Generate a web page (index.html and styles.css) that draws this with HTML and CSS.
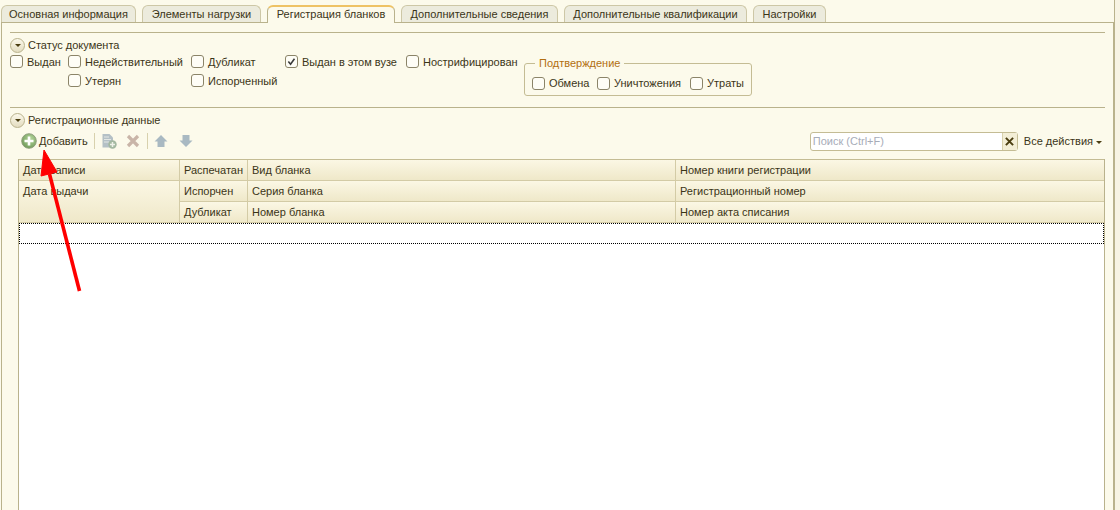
FILE: index.html
```html
<!DOCTYPE html>
<html lang="en">
<head>
    <meta charset="UTF-8">
    <title>Регистрация бланков</title>
    <link rel="stylesheet" href="styles.css">
</head>
<body>

    <div class="window">

        <!-- Tabs -->
        <div class="tabs">
            <div class="tab tab-1">Основная информация</div>
            <div class="tab tab-2">Элементы нагрузки</div>
            <div class="tab tab-3 active">Регистрация бланков</div>
            <div class="tab tab-4">Дополнительные сведения</div>
            <div class="tab tab-5">Дополнительные квалификации</div>
            <div class="tab tab-6">Настройки</div>
        </div>

        <div class="panel">

            <!-- Document status -->
            <section class="group status-group">
                <div class="group-title">
                    <span class="toggle"></span>
                    <span>Статус документа</span>
                </div>
                <div class="status-grid">
                    <label class="check"><span class="box"></span>Выдан</label>
                    <label class="check"><span class="box"></span>Недействительный</label>
                    <label class="check"><span class="box"></span>Дубликат</label>
                    <label class="check">
                        <span class="box">
                            <svg viewBox="0 0 14 14" width="12" height="12"><path d="M3 6.5 L5.8 9.8 L10.8 2.8" fill="none" stroke="#3a3a3a" stroke-width="2"/></svg>
                        </span>Выдан в этом вузе
                    </label>
                    <label class="check"><span class="box"></span>Нострифицирован</label>

                    <fieldset class="confirm">
                        <legend>Подтверждение</legend>
                        <label class="check"><span class="box"></span>Обмена</label>
                        <label class="check"><span class="box"></span>Уничтожения</label>
                        <label class="check"><span class="box"></span>Утраты</label>
                    </fieldset>

                    <label class="check col-2"><span class="box"></span>Утерян</label>
                    <label class="check col-3"><span class="box"></span>Испорченный</label>
                </div>
            </section>

            <!-- Registration data -->
            <section class="group data-group">
                <div class="group-title">
                    <span class="toggle"></span>
                    <span>Регистрационные данные</span>
                </div>

                <div class="toolbar">
                    <svg class="icon-add" viewBox="0 0 16 16" width="16" height="16">
                        <defs>
                            <radialGradient id="addFill" cx="60%" cy="35%" r="70%">
                                <stop offset="0" stop-color="#b4d69a"/>
                                <stop offset="1" stop-color="#6f9a5a"/>
                            </radialGradient>
                        </defs>
                        <circle cx="8" cy="8" r="7.3" fill="url(#addFill)" stroke="#8a9a78" stroke-width="0.9"/>
                        <path d="M8 3.5 V12.5 M3.5 8 H12.5" stroke="#fff" stroke-width="2.6"/>
                    </svg>
                    <span class="add-label">Добавить</span>
                    <span class="sep sep-1"></span>
                    <svg class="icon-copy" viewBox="0 0 16 16" width="16" height="16">
                        <path d="M1.5 1 H8.5 L12 4.5 V14.5 H1.5 Z" fill="#b4c0c6"/>
                        <path d="M3 4 H8 M3 6.5 H10 M3 9 H8" stroke="#e3e7e4" stroke-width="1"/>
                        <circle cx="11.5" cy="11.5" r="4.2" fill="#a3b8a0"/>
                        <path d="M11.5 9 V14 M9 11.5 H14" stroke="#eef1e8" stroke-width="1.5"/>
                    </svg>
                    <svg class="icon-del" viewBox="0 0 14 14" width="14" height="14">
                        <path d="M2 2 L12 12 M12 2 L2 12" stroke="#c9b5a8" stroke-width="3.2"/>
                    </svg>
                    <span class="sep sep-2"></span>
                    <svg class="icon-up" viewBox="0 0 14 14" width="14" height="14">
                        <path d="M7 1 L13.5 7.5 H10.5 V13 H3.5 V7.5 H0.5 Z" fill="#a9b9c2"/>
                    </svg>
                    <svg class="icon-down" viewBox="0 0 14 14" width="14" height="14">
                        <path d="M7 13 L13.5 6.5 H10.5 V1 H3.5 V6.5 H0.5 Z" fill="#a9b9c2"/>
                    </svg>

                    <div class="search">
                        <span class="search-text">Поиск (Ctrl+F)</span>
                        <span class="search-clear">
                            <svg viewBox="0 0 10 10" width="9" height="9"><path d="M1 1 L9 9 M9 1 L1 9" stroke="#4a3d10" stroke-width="2.2"/></svg>
                        </span>
                    </div>
                    <span class="all-actions">Все действия</span>
                    <span class="caret"></span>
                </div>

                <!-- Table -->
                <div class="table">
                    <div class="table-head">
                        <div class="cell">Дата записи</div>
                        <div class="cell">Распечатан</div>
                        <div class="cell">Вид бланка</div>
                        <div class="cell last">Номер книги регистрации</div>
                        <div class="cell tall">Дата выдачи</div>
                        <div class="cell">Испорчен</div>
                        <div class="cell">Серия бланка</div>
                        <div class="cell last">Регистрационный номер</div>
                        <div class="cell">Дубликат</div>
                        <div class="cell">Номер бланка</div>
                        <div class="cell last">Номер акта списания</div>
                    </div>
                    <div class="row-current"></div>
                </div>
            </section>
        </div>
    </div>

    <!-- Red arrow drawn over the form -->
    <svg class="arrow" viewBox="0 0 1120 510" width="1120" height="510">
        <path d="M79.5 291 L49.5 174" stroke="#ff0000" stroke-width="3.6" fill="none"/>
        <path d="M44 150 L41 176 L57 172 Z" fill="#ff0000" stroke="#ff0000"/>
    </svg>

</body>
</html>
```

FILE: styles.css
```css
/* Basic reset */
* {
    margin: 0;
    padding: 0;
    box-sizing: border-box;
}

body {
    position: relative;
    display: flex;
    width: 1120px;
    height: 510px;
    overflow: hidden;
    font-family: "Liberation Sans", Arial, sans-serif;
    font-size: 11px;
    color: #3b3517;
    background-color: #f7f3e3;
}

.window {
    width: 1115px;
    height: 510px;
    padding: 5px 0 0 1px;
    background-color: #fcfaeb;
    border-right: 1px solid #b9b28c;
}

/* Tabs */
.tabs {
    display: flex;
    height: 17px;
}

.tab {
    height: 17px;
    padding-top: 2px;
    text-align: center;
    white-space: nowrap;
    background-color: #ecebdd;
    border: 1px solid #cdc7a6;
    border-bottom: none;
    border-radius: 6px 6px 0 0;
}

.tab.active {
    height: 18px;
    background-color: #fcfaeb;
    border-color: #b9b28c;
    border-top: 2px solid #eec264;
    padding-top: 1px;
    position: relative;
    z-index: 1;
}

.tab-1 { width: 135px; margin-right: 6px; }
.tab-2 { width: 119px; margin-right: 6px; }
.tab-3 { width: 128px; margin-right: 6px; }
.tab-4 { width: 157px; margin-right: 6px; }
.tab-5 { width: 183px; margin-right: 6px; }
.tab-6 { width: 73px; }

.panel {
    width: 1113px;
    height: 488px;
    padding: 9px 8px 0 8px;
    border-top: 1px solid #b9b28c;
    border-left: 1px solid #b9b28c;
    border-right: 1px solid #b9b28c;
}

/* Collapsible groups */
.group {
    border-top: 1px solid #b9b28c;
}

.status-group {
    height: 75px;
}

.group-title {
    display: flex;
    align-items: center;
    gap: 3px;
    height: 14px;
    margin-top: 5px;
}

.toggle {
    position: relative;
    width: 15px;
    height: 15px;
    background: linear-gradient(#fbf8ea, #e3dcc0);
    border: 1px solid #b9b28c;
    border-radius: 50%;
}

.toggle::after {
    content: "";
    position: absolute;
    left: 4px;
    top: 5px;
    border-left: 3px solid transparent;
    border-right: 3px solid transparent;
    border-top: 3px solid #4a3d10;
}

/* Checkboxes */
.status-grid {
    display: grid;
    grid-template-columns: 58px 123px 94px 121px 118px 228px;
    grid-template-rows: 19px 19px;
    height: 38px;
}

.check {
    display: flex;
    align-items: center;
    gap: 4px;
    white-space: nowrap;
}

.box {
    display: flex;
    align-items: center;
    justify-content: center;
    width: 13px;
    height: 13px;
    background-color: #fefdf6;
    border: 1px solid #8b8468;
    border-radius: 3px;
}

.col-2 { grid-column: 2; }
.col-3 { grid-column: 3; }

.confirm {
    grid-column: 6;
    grid-row: 1 / span 2;
    display: grid;
    grid-template-columns: 65px 93px auto;
    height: 39px;
    margin-top: 5px;
    padding: 2px 0 0 7px;
    border: 1px solid #c4bc94;
    border-radius: 3px;
}

.confirm legend {
    margin-left: 3px;
    padding: 0 4px;
    color: #b26f10;
}

/* Toolbar */
.toolbar {
    display: flex;
    align-items: center;
    height: 20px;
    margin-top: 4px;
    padding-left: 11px;
}

.add-label { margin-left: 2px; }
.sep {
    width: 1px;
    height: 16px;
    background-color: #d8d1ad;
}

.sep-1 { margin: 0 6px; }
.icon-del { margin: 0 7px 0 9px; }
.sep-2 { margin-right: 6px; }
.icon-down { margin-left: 11px; }

.search {
    display: flex;
    width: 208px;
    height: 19px;
    margin-left: auto;
    background-color: #fff;
    border: 1px solid #c4bc94;
    border-radius: 3px;
}

.search-text {
    flex: 1;
    padding: 2px 0 0 2px;
    color: #a7acb8;
}

.search-clear {
    display: flex;
    align-items: center;
    justify-content: center;
    width: 15px;
    background-color: #f3eed6;
    border-left: 1px solid #d8d1ad;
}

.all-actions { margin-left: 6px; }

.caret {
    margin: 2px 3px 0 3px;
    border-left: 3px solid transparent;
    border-right: 3px solid transparent;
    border-top: 3px solid #4a3d10;
}

/* Table */
.table {
    width: 1087px;
    height: 352px;
    margin: 8px 0 0 8px;
    background-color: #fff;
    border-left: 1px solid #b9b28c;
    border-right: 1px solid #b9b28c;
}

.table-head {
    display: grid;
    grid-template-columns: 161px 68px 428px 1fr;
    grid-template-rows: 21px 21px 21px;
    border-top: 1px solid #c4bc94;
}

.cell {
    padding: 4px 0 0 4px;
    white-space: nowrap;
    background: linear-gradient(#fbf7e4, #efe8c9);
    border-right: 1px solid #d3cba6;
    border-bottom: 1px solid #d3cba6;
}

.cell.last { border-right: none; }
.cell.tall { grid-row: 2 / span 2; }

.row-current {
    height: 21px;
    background-color: #fff;
    border: 1px dotted #000;
}

/* Arrow overlay */
.arrow {
    position: absolute;
    left: 0;
    top: 0;
    pointer-events: none;
}
```
